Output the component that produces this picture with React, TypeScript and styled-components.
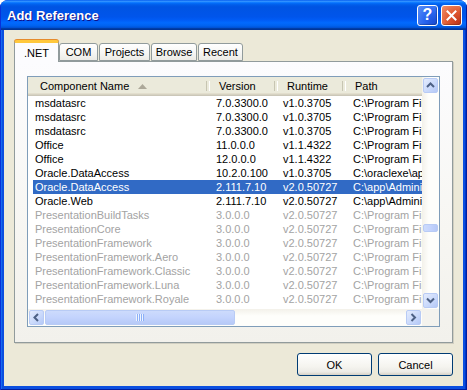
import React from "react";
import styled, { createGlobalStyle } from "styled-components";

const Global = createGlobalStyle`
  html, body { margin: 0; padding: 0; background: #ffffff; }
  body { font-family: "Liberation Sans", Arial, sans-serif; font-size: 11px; color: #000; }
  * { box-sizing: border-box; }
`;

const Window = styled.div`
  width: 467px;
  height: 390px;
  display: flex;
  flex-direction: column;
  border-radius: 8px 8px 0 0;
  overflow: hidden;
  background: #0831d9;
`;

const TitleBar = styled.div`
  height: 30px;
  flex: none;
  display: flex;
  align-items: center;
  padding: 0 5px 0 7px;
  gap: 3px;
  background: linear-gradient(
    180deg,
    #0058ee 0%,
    #3593ff 4%,
    #288eff 6%,
    #127dff 8%,
    #036ffc 10%,
    #0262ee 14%,
    #0057e5 20%,
    #0054e3 24%,
    #0055eb 56%,
    #005bf5 66%,
    #026afe 76%,
    #0062ef 86%,
    #0052d6 92%,
    #0040ab 94%,
    #003092 100%
  );
  box-shadow: inset 1px 0 #0831d9, inset -1px 0 #001ea0;
`;

const Title = styled.div`
  flex: 1;
  color: #fff;
  font-family: "Liberation Sans", Arial, sans-serif;
  font-weight: bold;
  font-size: 13px;
  text-shadow: 1px 1px #0f1089;
  padding-top: 1px;
`;

const CapButton = styled.div<{ $kind: "help" | "close" }>`
  width: 21px;
  height: 21px;
  border: 1px solid #ffffff;
  border-radius: 3px;
  display: flex;
  align-items: center;
  justify-content: center;
  color: #fff;
  font-family: "Liberation Sans", Arial, sans-serif;
  font-weight: bold;
  font-size: 16px;
  background: ${(p) =>
    p.$kind === "help"
      ? "radial-gradient(circle at 85% 85%, #1a4fd8 0%, #2a67f0 45%, #5a8ff7 100%)"
      : "radial-gradient(circle at 85% 85%, #c3391c 0%, #e0582f 45%, #f1906b 100%)"};
  box-shadow: inset -1px -1px 1px rgba(0, 0, 0, 0.25);
`;

const Frame = styled.div`
  flex: 1;
  min-height: 0;
  display: flex;
  padding: 0 4px 4px 4px;
  background: #0b4fe0;
  box-shadow: inset 1px 0 #0831d9, inset -1px 0 #001ea0, inset 0 -1px #001ea0,
    inset 2px 0 #166aee, inset -2px 0 #0038c8;
`;

const Client = styled.div`
  flex: 1;
  min-height: 0;
  min-width: 0;
  display: flex;
  flex-direction: column;
  background: #ece9d8;
  padding: 10px;
`;

const TabRow = styled.div`
  height: 21px;
  flex: none;
  display: flex;
  align-items: flex-end;
  position: relative;
  z-index: 1;
`;

const Tab = styled.div<{ $w: number; $active?: boolean }>`
  width: ${(p) => p.$w}px;
  height: ${(p) => (p.$active ? 22 : 18)}px;
  margin-bottom: ${(p) => (p.$active ? -1 : 0)}px;
  margin-right: ${(p) => (p.$active ? 0 : 1)}px;
  display: flex;
  align-items: center;
  justify-content: center;
  padding-top: ${(p) => (p.$active ? 1 : 0)}px;
  border: 1px solid #919b9c;
  border-bottom: ${(p) => (p.$active ? "none" : "1px solid #919b9c")};
  border-top: ${(p) => (p.$active ? "3px solid #ffc83c" : "1px solid #919b9c")};
  border-radius: 3px 3px 0 0;
  background: ${(p) =>
    p.$active ? "#fcfcfe" : "linear-gradient(180deg, #ffffff 0%, #f7f7f5 50%, #ecebe6 100%)"};
  box-shadow: ${(p) => (p.$active ? "0 -1px 0 #e68b2c" : "none")};
  font-size: 11px;
  white-space: nowrap;
`;

const Panel = styled.div`
  flex: 1;
  min-height: 0;
  display: flex;
  flex-direction: column;
  border: 1px solid #919b9c;
  background: linear-gradient(180deg, #fcfcfe 0%, #f7f6f2 60%, #f2f1ec 100%);
  box-shadow: 1px 1px 0 #d0cec1;
  padding: 14px 12px 15px 12px;
`;

const List = styled.div`
  flex: 1;
  min-height: 0;
  border: 1px solid #7f9db9;
  background: #ffffff;
  display: grid;
  grid-template-columns: minmax(0, 1fr) 17px;
  grid-template-rows: minmax(0, 1fr) 17px;
`;

const Content = styled.div`
  display: flex;
  flex-direction: column;
  overflow: hidden;
  min-width: 0;
  min-height: 0;
`;

const Header = styled.div`
  height: 19px;
  flex: none;
  display: grid;
  grid-template-columns: 182px 68px 68px minmax(0, 1fr);
  background: #ebeadb;
  box-shadow: inset 0 -1px #cbc7b8, inset 0 -2px #d6d2c2, inset 0 -3px #e2decd;
`;

const HeaderCell = styled.div<{ $pad: number; $divider?: boolean }>`
  position: relative;
  display: flex;
  align-items: center;
  gap: 9px;
  padding-left: ${(p) => p.$pad}px;
  padding-bottom: 1px;
  white-space: nowrap;
  overflow: hidden;
  &::after {
    content: "";
    display: ${(p) => (p.$divider ? "block" : "none")};
    position: absolute;
    right: 0;
    top: 4px;
    bottom: 5px;
    width: 2px;
    border-left: 1px solid #c7c5b2;
    border-right: 1px solid #ffffff;
  }
`;

const Rows = styled.div`
  flex: 1;
  min-height: 0;
  overflow: hidden;
`;

const Row = styled.div<{ $selected?: boolean; $dim?: boolean }>`
  height: 14px;
  margin-left: 5px;
  display: grid;
  grid-template-columns: 177px 68px 68px minmax(0, 1fr);
  line-height: 14px;
  white-space: nowrap;
  background: ${(p) => (p.$selected ? "#316ac5" : "transparent")};
  color: ${(p) => (p.$selected ? "#ffffff" : p.$dim ? "#a3a3a3" : "#000000")};
`;

const Cell = styled.div<{ $pad: number }>`
  padding-left: ${(p) => p.$pad}px;
  overflow: hidden;
  min-width: 0;
`;

const VScroll = styled.div`
  display: flex;
  flex-direction: column;
  min-height: 0;
  background: linear-gradient(90deg, #f3f1ea 0%, #fefefb 40%, #fefefb 100%);
`;

const HScroll = styled.div`
  display: flex;
  min-width: 0;
  background: linear-gradient(180deg, #f3f1ea 0%, #fefefb 40%, #fefefb 100%);
`;

const Track = styled.div<{ $dir: "v" | "h" }>`
  flex: 1;
  min-height: 0;
  min-width: 0;
  display: flex;
  flex-direction: ${(p) => (p.$dir === "v" ? "column" : "row")};
`;

const ArrowBtn = styled.div`
  width: 17px;
  height: 17px;
  flex: none;
  padding: 1px;
  display: flex;
`;

const ArrowFace = styled.div`
  flex: 1;
  border: 1px solid #b8cbf5;
  border-radius: 2px;
  background: linear-gradient(135deg, #e4ecfd 0%, #c8d8fb 60%, #b4c8f6 100%);
  display: flex;
  align-items: center;
  justify-content: center;
`;

const Thumb = styled.div<{ $dir: "v" | "h"; $offset: number; $size: number }>`
  flex: none;
  margin: ${(p) => (p.$dir === "v" ? `${p.$offset}px 1px 0 1px` : `1px 0 1px ${p.$offset}px`)};
  ${(p) => (p.$dir === "v" ? `height: ${p.$size}px;` : `width: ${p.$size}px;`)}
  border: 1px solid #b8cbf5;
  border-radius: 2px;
  background: ${(p) =>
    p.$dir === "v"
      ? "linear-gradient(90deg, #cddbfc 0%, #c3d3fd 50%, #b6c9f7 100%)"
      : "linear-gradient(180deg, #cddbfc 0%, #c3d3fd 50%, #b6c9f7 100%)"};
  display: flex;
  align-items: center;
  justify-content: center;
`;

const Grip = styled.div`
  width: 8px;
  height: 7px;
  background: repeating-linear-gradient(90deg, #eef4fe 0 1px, #8cb0f8 1px 2px);
`;

const Corner = styled.div`
  background: #f4f3ee;
`;

const ButtonRow = styled.div`
  flex: none;
  display: flex;
  justify-content: flex-end;
  gap: 6px;
  margin-top: 10px;
`;

const Button = styled.div`
  width: 75px;
  height: 23px;
  border: 1px solid #003c74;
  border-radius: 3px;
  background: linear-gradient(180deg, #ffffff 0%, #f5f4ef 60%, #ecebe6 85%, #d6d0c5 100%);
  display: flex;
  align-items: center;
  justify-content: center;
  font-size: 11px;
`;

const Chevron = ({ dir }: { dir: "up" | "down" | "left" | "right" }) => {
  const pts: Record<string, string> = {
    up: "1,5 4.5,1.5 8,5",
    down: "1,1.5 4.5,5 8,1.5",
    left: "5,1 1.5,4.5 5,8",
    right: "1.5,1 5,4.5 1.5,8",
  };
  const v = dir === "up" || dir === "down";
  return (
    <svg width={v ? 9 : 7} height={v ? 7 : 9} viewBox={v ? "0 0 9 7" : "0 0 7 9"}>
      <polyline points={pts[dir]} fill="none" stroke="#4d6185" strokeWidth="2" />
    </svg>
  );
};

const SortArrow = () => (
  <svg width="9" height="5" viewBox="0 0 9 5">
    <polygon points="0,5 4.5,0 9,5" fill="#aca899" />
  </svg>
);

type Item = { name: string; ver: string; rt: string; path: string; dim?: boolean; sel?: boolean };

const pf = "C:\\Program Files\\Reference Assemblies\\Microsoft\\Framework\\v3.0\\";
const items: Item[] = [
  { name: "msdatasrc", ver: "7.0.3300.0", rt: "v1.0.3705", path: "C:\\Program Files\\Microsoft.NET\\Primary Interop Assemblies\\msdatasrc.dll" },
  { name: "msdatasrc", ver: "7.0.3300.0", rt: "v1.0.3705", path: "C:\\Program Files\\Microsoft.NET\\Primary Interop Assemblies\\msdatasrc.dll" },
  { name: "msdatasrc", ver: "7.0.3300.0", rt: "v1.0.3705", path: "C:\\Program Files\\Microsoft.NET\\Primary Interop Assemblies\\msdatasrc.dll" },
  { name: "Office", ver: "11.0.0.0", rt: "v1.1.4322", path: "C:\\Program Files\\Microsoft Visual Studio 9.0\\Office.dll" },
  { name: "Office", ver: "12.0.0.0", rt: "v1.1.4322", path: "C:\\Program Files\\Microsoft Visual Studio 9.0\\Office.dll" },
  { name: "Oracle.DataAccess", ver: "10.2.0.100", rt: "v1.0.3705", path: "C:\\oraclexe\\app\\oracle\\product\\10.2.0\\server\\bin" },
  { name: "Oracle.DataAccess", ver: "2.111.7.10", rt: "v2.0.50727", path: "C:\\app\\Administrator\\product\\11.1.0\\client_1\\odp.net", sel: true },
  { name: "Oracle.Web", ver: "2.111.7.10", rt: "v2.0.50727", path: "C:\\app\\Administrator\\product\\11.1.0\\client_1\\asp.net" },
  { name: "PresentationBuildTasks", ver: "3.0.0.0", rt: "v2.0.50727", path: pf + "PresentationBuildTasks.dll", dim: true },
  { name: "PresentationCore", ver: "3.0.0.0", rt: "v2.0.50727", path: pf + "PresentationCore.dll", dim: true },
  { name: "PresentationFramework", ver: "3.0.0.0", rt: "v2.0.50727", path: pf + "PresentationFramework.dll", dim: true },
  { name: "PresentationFramework.Aero", ver: "3.0.0.0", rt: "v2.0.50727", path: pf + "PresentationFramework.Aero.dll", dim: true },
  { name: "PresentationFramework.Classic", ver: "3.0.0.0", rt: "v2.0.50727", path: pf + "PresentationFramework.Classic.dll", dim: true },
  { name: "PresentationFramework.Luna", ver: "3.0.0.0", rt: "v2.0.50727", path: pf + "PresentationFramework.Luna.dll", dim: true },
  { name: "PresentationFramework.Royale", ver: "3.0.0.0", rt: "v2.0.50727", path: pf + "PresentationFramework.Royale.dll", dim: true },
];

const tabs = [
  { label: ".NET", w: 45, active: true },
  { label: "COM", w: 39 },
  { label: "Projects", w: 51 },
  { label: "Browse", w: 46 },
  { label: "Recent", w: 45 },
];

export default function App() {
  return (
    <>
      <Global />
      <Window>
        <TitleBar>
          <Title>Add Reference</Title>
          <CapButton $kind="help">?</CapButton>
          <CapButton $kind="close">
            <svg width="11" height="11" viewBox="0 0 11 11">
              <path d="M1.5 1.5 L9.5 9.5 M9.5 1.5 L1.5 9.5" stroke="#fff" strokeWidth="2" strokeLinecap="square" />
            </svg>
          </CapButton>
        </TitleBar>
        <Frame>
          <Client>
            <TabRow>
              {tabs.map((t) => (
                <Tab key={t.label} $w={t.w} $active={t.active}>
                  {t.label}
                </Tab>
              ))}
            </TabRow>
            <Panel>
              <List>
                <Content>
                  <Header>
                    <HeaderCell $pad={12} $divider>
                      Component Name <SortArrow />
                    </HeaderCell>
                    <HeaderCell $pad={9} $divider>Version</HeaderCell>
                    <HeaderCell $pad={9} $divider>Runtime</HeaderCell>
                    <HeaderCell $pad={9}>Path</HeaderCell>
                  </Header>
                  <Rows>
                    {items.map((it, i) => (
                      <Row key={i} $selected={it.sel} $dim={it.dim}>
                        <Cell $pad={2}>{it.name}</Cell>
                        <Cell $pad={6}>{it.ver}</Cell>
                        <Cell $pad={5}>{it.rt}</Cell>
                        <Cell $pad={7}>{it.path}</Cell>
                      </Row>
                    ))}
                  </Rows>
                </Content>
                <VScroll>
                  <ArrowBtn>
                    <ArrowFace>
                      <Chevron dir="up" />
                    </ArrowFace>
                  </ArrowBtn>
                  <Track $dir="v">
                    <Thumb $dir="v" $offset={130} $size={8} />
                  </Track>
                  <ArrowBtn>
                    <ArrowFace>
                      <Chevron dir="down" />
                    </ArrowFace>
                  </ArrowBtn>
                </VScroll>
                <HScroll>
                  <ArrowBtn>
                    <ArrowFace>
                      <Chevron dir="left" />
                    </ArrowFace>
                  </ArrowBtn>
                  <Track $dir="h">
                    <Thumb $dir="h" $offset={0} $size={190}>
                      <Grip />
                    </Thumb>
                  </Track>
                  <ArrowBtn>
                    <ArrowFace>
                      <Chevron dir="right" />
                    </ArrowFace>
                  </ArrowBtn>
                </HScroll>
                <Corner />
              </List>
            </Panel>
            <ButtonRow>
              <Button>OK</Button>
              <Button>Cancel</Button>
            </ButtonRow>
          </Client>
        </Frame>
      </Window>
    </>
  );
}
